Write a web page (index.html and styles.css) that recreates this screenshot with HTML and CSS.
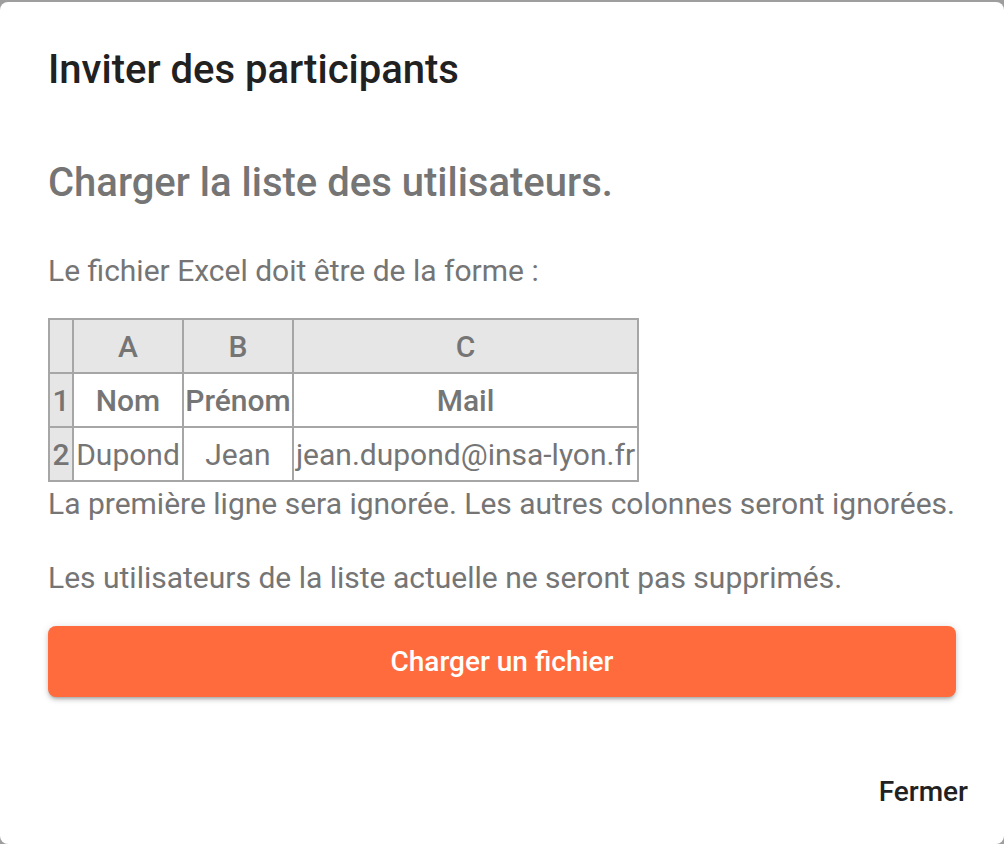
FILE: index.html
```html
<!DOCTYPE html>
<html lang="fr">
<head>
<meta charset="utf-8">
<title>Inviter des participants</title>
<link rel="stylesheet" href="styles.css">
</head>
<body>
<div class="dialog">
  <h2 class="title">Inviter des participants</h2>
  <div class="content">
    <h3 class="subtitle">Charger la liste des utilisateurs.</h3>
    <p class="text">Le fichier Excel doit être de la forme :</p>
    <table class="sheet">
      <colgroup>
        <col class="c0"><col class="c1"><col class="c2"><col class="c3">
      </colgroup>
      <tr class="head"><th></th><th>A</th><th>B</th><th>C</th></tr>
      <tr><th class="idx">1</th><th>Nom</th><th>Prénom</th><th>Mail</th></tr>
      <tr><th class="idx">2</th><td>Dupond</td><td>Jean</td><td>jean.dupond@insa-lyon.fr</td></tr>
    </table>
    <p class="text after">La première ligne sera ignorée. Les autres colonnes seront ignorées.</p>
    <p class="text note">Les utilisateurs de la liste actuelle ne seront pas supprimés.</p>
    <button class="upload">Charger un fichier</button>
  </div>
  <div class="actions">
    <button class="close">Fermer</button>
  </div>
</div>
</body>
</html>
```
FILE: styles.css
```css
html, body {
  margin: 0;
  padding: 0;
}
body {
  background: #9e9e9e;
  font-family: Roboto, "Noto Sans", sans-serif;
  height: 844px;
  overflow: hidden;
}
.dialog {
  margin-top: 2px;
  height: 842px;
  background: #fff;
  border-radius: 8px;
  display: flex;
  flex-direction: column;
  box-sizing: border-box;
}
.title {
  margin: 0;
  padding: 44px 48px 0;
  font-size: 40px;
  line-height: 48px;
  font-weight: 500;
  color: #212121;
}
.content {
  padding: 0 48px;
  flex: 1;
}
.subtitle {
  margin: 65px 0 0;
  font-size: 40px;
  line-height: 48px;
  font-weight: 500;
  color: #757575;
}
.text {
  margin: 0;
  font-size: 30px;
  line-height: 36px;
  color: #757575;
}
.subtitle + .text {
  margin-top: 46px;
}
.sheet {
  margin-top: 29px;
  border-collapse: collapse;
  table-layout: fixed;
  color: #757575;
  font-size: 30px;
}
.sheet th, .sheet td {
  border: 2px solid #a6a6a6;
  padding: 0;
  height: 52px;
  text-align: center;
  white-space: nowrap;
}
.sheet th { font-weight: 500; }
.sheet td { font-weight: 400; }
.sheet .head th, .sheet .idx { background: #e6e6e6; }
.c0 { width: 24px; }
.c1 { width: 110px; }
.c2 { width: 110px; }
.c3 { width: 345px; }
.after { margin-top: 4px; }
.note { margin-top: 38px; }
.upload {
  display: block;
  width: 100%;
  margin-top: 30px;
  height: 71px;
  border: none;
  border-radius: 8px;
  background: #ff6b3d;
  color: #fff;
  font-family: inherit;
  font-size: 28px;
  font-weight: 500;
  box-shadow: 0 3px 3px -2px rgba(0,0,0,.2), 0 3px 4px 0 rgba(0,0,0,.14), 0 1px 8px 0 rgba(0,0,0,.12);
}
.actions {
  display: flex;
  justify-content: flex-end;
  padding: 0 20px 24px;
}
.close {
  border: none;
  background: transparent;
  font-family: inherit;
  font-size: 28px;
  font-weight: 500;
  color: #212121;
  padding: 8px 16px;
  line-height: 40px;
}
```
